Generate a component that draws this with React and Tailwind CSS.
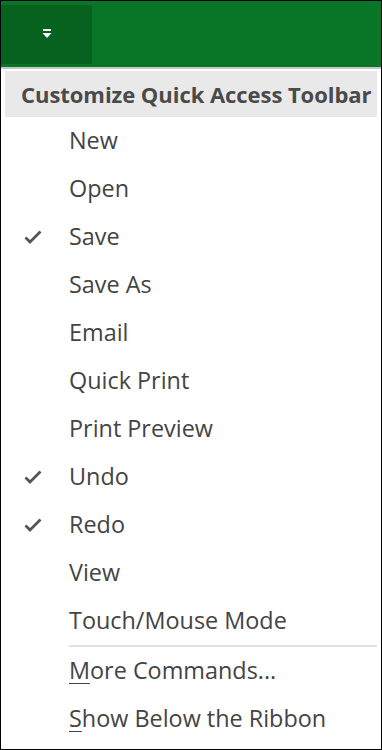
import React from "react";

const items = [
  { label: "New" },
  { label: "Open" },
  { label: "Save", checked: true },
  { label: "Save As" },
  { label: "Email" },
  { label: "Quick Print" },
  { label: "Print Preview" },
  { label: "Undo", checked: true },
  { label: "Redo", checked: true },
  { label: "View" },
  { label: "Touch/Mouse Mode" },
];

function Check() {
  return (
    <svg width="18" height="14" viewBox="0 0 18 14" className="block">
      <path d="M1.5 7.5 L6 12 L16.5 1.5" fill="none" stroke="#555" strokeWidth="2.8" />
    </svg>
  );
}

function Row({ children, checked }) {
  return (
    <div className="flex h-[48px] items-center">
      <div className="flex w-[64px] items-center pl-[19px]">{checked ? <Check /> : null}</div>
      <div className="leading-none">{children}</div>
    </div>
  );
}

export default function App() {
  return (
    <div
      className="box-border flex h-[750px] w-[382px] flex-col border border-black bg-white text-[23.4px] text-[#444]"
      style={{ fontFamily: '"Open Sans", "Noto Sans", sans-serif' }}
    >
      <div className="flex h-[66px] items-center bg-[#087626] pl-0">
        <div className="flex h-[59px] w-[91px] items-center justify-center bg-[#07621f]">
          <svg width="12" height="12" viewBox="0 0 12 12">
            <rect x="2" y="1" width="8" height="2" fill="#fff" />
            <path d="M1.5 5 H10.5 L6 10 Z" fill="#fff" />
          </svg>
        </div>
      </div>
      <div className="flex flex-1 flex-col border-t-2 border-[#c6c6c6] px-[4px] pt-[2px]">
        <div className="flex h-[46px] items-center overflow-hidden whitespace-nowrap bg-[#e9e9e9] pl-[16px] font-bold text-[22px] leading-none tracking-[-0.05px] text-[#4a4a4a]">
          Customize Quick Access Toolbar
        </div>
        {items.map((it) => (
          <Row key={it.label} checked={it.checked}>
            {it.label}
          </Row>
        ))}
        <div className="ml-[64px] h-[2px] bg-[#e1e1e1]" />
        <Row>
          <span className="underline decoration-1 underline-offset-4">M</span>ore Commands...
        </Row>
        <Row>
          <span className="underline decoration-1 underline-offset-4">S</span>how Below the Ribbon
        </Row>
      </div>
    </div>
  );
}
